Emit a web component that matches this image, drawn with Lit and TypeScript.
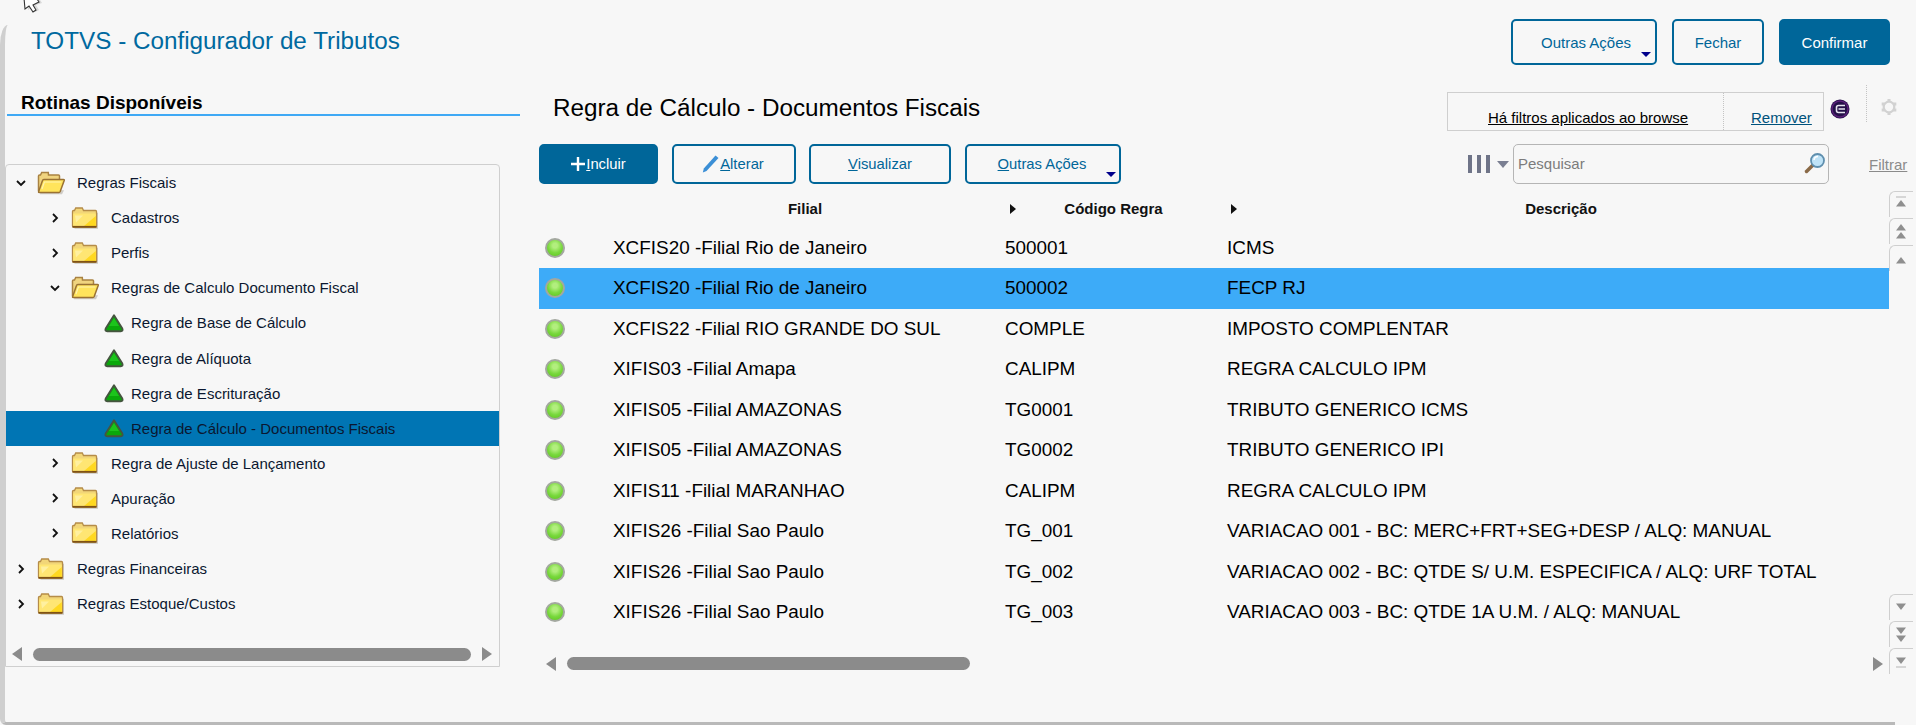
import { LitElement, html, css, svg } from "lit";
import { customElement } from "lit/decorators.js";

const folderClosed = html`<svg class="folder" viewBox="0 0 28 24" width="28" height="24">
  <path d="M3.500 22.800h23.500v-16h-1.500v14.500h-22z" fill="#c4c1ba" opacity=".85"/>
  <path d="M1.500 5.500q0-1 1-1h1l1.200-2.500h6.600l1.200 2.500h12q1 0 1 1v14.500q0 1-1 1h-22q-1 0-1-1z" fill="#f2d678" stroke="#b58c48" stroke-width="1.300"/>
  <path d="M2.200 7.500h22.600v12.500h-22.600z" fill="#ffe673"/>
  <path d="M13 20l11.800-10v10z" fill="#ffd820"/>
  <path d="M4 9.500l8 0-7 7z" fill="#fff0a0"/>
  <path d="M1.500 20.800h24" stroke="#7f5215" stroke-width="1.800"/>
</svg>`;

const folderOpen = html`<svg class="folder" viewBox="0 0 28 24" width="28" height="24">
  <path d="M3 23.200h22l2-4H4z" fill="#c4c1ba" opacity=".8"/>
  <path d="M1.500 20V5q0-1 1-1h1l1.200-2.500h6.600L11.500 4h10q1 0 1 1v4" fill="#f0d47f" stroke="#a98242" stroke-width="1.500"/>
  <path d="M1.500 21l4-11.500q.3-1 1.300-1h19.700q1 0 .7 1l-4 11q-.4 1-1.400 1H2.500q-1 0-1-.5z" fill="#ffe45c" stroke="#9a7233" stroke-width="1.500"/>
  <path d="M5 18l2.400-7h17" fill="none" stroke="#fff3b0" stroke-width="1.200"/>
</svg>`;

const leaf = html`<svg class="leaf" viewBox="0 0 20 20" width="20" height="20">
  <path d="M10 2.300L18.300 15.500q1 2.700-1.500 2.700H3.200q-2.500 0-1.500-2.700z" fill="#0aa80a" stroke="#45553f" stroke-width="1.900" stroke-linejoin="round"/>
  <path d="M10 5L5 13h10z" fill="#1cc41c"/>
</svg>`;

const chevDown = html`<svg class="chev" viewBox="0 0 10 10" width="10" height="10"><path d="M1 3l4 4 4-4" fill="none" stroke="#111" stroke-width="1.800"/></svg>`;
const chevRight = html`<svg class="chev" viewBox="0 0 10 10" width="10" height="10"><path d="M3 1l4 4-4 4" fill="none" stroke="#111" stroke-width="1.800"/></svg>`;

type TreeRow = { label: string; level: number; kind: "open" | "closed" | "leaf"; selected?: boolean };
const tree: TreeRow[] = [
  { label: "Regras Fiscais", level: 0, kind: "open" },
  { label: "Cadastros", level: 1, kind: "closed" },
  { label: "Perfis", level: 1, kind: "closed" },
  { label: "Regras de Calculo Documento Fiscal", level: 1, kind: "open" },
  { label: "Regra de Base de Cálculo", level: 2, kind: "leaf" },
  { label: "Regra de Alíquota", level: 2, kind: "leaf" },
  { label: "Regra de Escrituração", level: 2, kind: "leaf" },
  { label: "Regra de Cálculo - Documentos Fiscais", level: 2, kind: "leaf", selected: true },
  { label: "Regra de Ajuste de Lançamento", level: 1, kind: "closed" },
  { label: "Apuração", level: 1, kind: "closed" },
  { label: "Relatórios", level: 1, kind: "closed" },
  { label: "Regras Financeiras", level: 0, kind: "closed" },
  { label: "Regras Estoque/Custos", level: 0, kind: "closed" },
];

const rows: [string, string, string][] = [
  ["XCFIS20 -Filial Rio de Janeiro", "500001", "ICMS"],
  ["XCFIS20 -Filial Rio de Janeiro", "500002", "FECP RJ"],
  ["XCFIS22 -Filial RIO GRANDE DO SUL", "COMPLE", "IMPOSTO COMPLENTAR"],
  ["XIFIS03 -Filial Amapa", "CALIPM", "REGRA CALCULO IPM"],
  ["XIFIS05 -Filial AMAZONAS", "TG0001", "TRIBUTO GENERICO ICMS"],
  ["XIFIS05 -Filial AMAZONAS", "TG0002", "TRIBUTO GENERICO IPI"],
  ["XIFIS11 -Filial MARANHAO", "CALIPM", "REGRA CALCULO IPM"],
  ["XIFIS26 -Filial Sao Paulo", "TG_001", "VARIACAO 001 - BC: MERC+FRT+SEG+DESP / ALQ: MANUAL"],
  ["XIFIS26 -Filial Sao Paulo", "TG_002", "VARIACAO 002 - BC: QTDE S/ U.M. ESPECIFICA / ALQ: URF TOTAL"],
  ["XIFIS26 -Filial Sao Paulo", "TG_003", "VARIACAO 003 - BC: QTDE 1A U.M. / ALQ: MANUAL"],
];

const up = svg`<path d="M7 0L12 6.500H2z" fill="#8f8f8f"/>`;
const railBtn = (content: unknown) => html`<div class="rail-btn"><svg viewBox="0 0 14 20" width="14" height="20">${content}</svg></div>`;

@customElement("app-root")
export class AppRoot extends LitElement {
  static styles = css`
    :host { display: block; width: 1916px; height: 725px; overflow: hidden; background: #f7f7f7; font-family: "Liberation Sans", Arial, sans-serif; color: #000; }
    * { box-sizing: border-box; }
    .page { position: relative; width: 1916px; height: 725px; padding-left: 5px; display: flex; flex-direction: column; }
    .edge { position: absolute; left: 0; top: 25px; width: 1895px; height: 700px; border-left: 5px solid #cfcfcf; border-bottom: 3px solid #b9b9b9; border-top-left-radius: 8px 20px; border-bottom-left-radius: 6px; pointer-events: none; }
    .cursor { position: absolute; left: 23px; top: 0; }

    header { height: 85px; flex: none; display: flex; align-items: flex-start; padding: 19px 26px 0 26px; }
    h1 { margin: 0 auto 0 0; font-weight: 400; font-size: 24.25px; line-height: 44px; color: #00699f; }
    .btn { position: relative; height: 46px; display: flex; align-items: center; justify-content: center; border: 2px solid #006699; border-radius: 5px; color: #006699; font-size: 15px; background: transparent; }
    .btn.fill { background: #006699; color: #fff; }
    .btn .drop { position: absolute; right: 4px; bottom: 6px; width: 0; height: 0; border: 5px solid transparent; border-top: 5px solid #00008b; border-bottom: 0; }
    .top-actions { display: flex; gap: 15px; }
    .b-oa { width: 146px; padding-left: 4px; }
    .b-fe { width: 92px; }
    .b-co { width: 111px; }

    .body { flex: 1; display: flex; min-height: 0; }
    aside { width: 515px; flex: none; }
    .aside-title { margin-left: 2px; height: 31px; border-bottom: 2px solid #3fa9f5; padding-left: 14px; font-size: 19px; font-weight: 700; line-height: 36px; color: #000; }
    .tree { margin-top: 48px; width: 495px; height: 503px; border: 1px solid #cfcfcf; border-radius: 4px 4px 0 0; display: flex; flex-direction: column; }
    .tree-rows { flex: 1; }
    .tr { height: 35.1px; display: flex; align-items: center; font-size: 15px; color: #0b1730; white-space: nowrap; }
    .tr.l0 { padding-left: 10px; }
    .tr.l1 { padding-left: 44px; }
    .tr.l2 { padding-left: 94px; }
    .tr.sel { background: #0075b4; }
    .chev { flex: none; margin-right: 11px; }
    .folder { flex: none; margin-right: 12px; }
    .leaf { flex: none; margin-right: 7px; margin-left: 4px; }
    .hs { display: flex; align-items: center; flex: none; }
    .tree .hs { height: 14px; margin-bottom: 5px; padding-left: 6px; }
    .ar { width: 0; height: 0; border-top: 7px solid transparent; border-bottom: 7px solid transparent; flex: none; }
    .ar.l { border-right: 10px solid #8b8b8b; }
    .ar.r { border-left: 10px solid #8b8b8b; }
    .thumb { height: 13px; border-radius: 7px; background: #8b8b8b; flex: none; }
    .tree .thumb { width: 438px; margin: 0 11px 0 11px; }

    main { width: 1377px; margin-left: 19px; flex: none; display: flex; flex-direction: column; }
    .title-row { height: 59px; flex: none; display: flex; align-items: flex-start; }
    h2 { margin: 0 auto 0 14px; font-weight: 400; font-size: 24.25px; line-height: 46px; color: #000; white-space: nowrap; }
    .filter { margin-top: 7px; width: 377px; height: 39px; border: 1px solid #cfcfcf; display: flex; font-size: 15px; line-height: 20px; }
    .filter a { display: inline-block; text-decoration: underline; padding-top: 15px; }
    .f1 { width: 276px; padding-left: 40px; border-right: 1px dotted #c4c4c4; color: #000; }
    .f2 { padding-left: 27px; color: #00527c; }
    .badge { margin: 14px 0 0 6px; flex: none; }
    .sep { margin-left: 16px; width: 0; height: 37px; border-left: 1px dotted #c4c4c4; flex: none; }
    .gear { margin: 14px 19px 0 14px; flex: none; }

    .toolbar { height: 40px; flex: none; display: flex; align-items: stretch; }
    .toolbar .btn { height: 40px; font-size: 14.8px; margin-right: 14px; }
    .toolbar .b-al { margin-right: 13px; }
    .b-in { width: 119px; gap: 1px; }
    .b-al { width: 124px; gap: 1px; padding-right: 2px; }
    .b-vi { width: 142px; }
    .b-ou { width: 156px; padding-right: 2px; }
    .toolbar .btn .drop { bottom: 5px; right: 3px; }
    .cols { margin-left: auto; display: flex; align-items: center; gap: 7px; margin-right: 4px; }
    .caret { width: 0; height: 0; border: 6px solid transparent; border-top: 7px solid #7a7f92; border-bottom: 0; }
    .search { width: 316px; border: 1px solid #b5b5b5; border-radius: 5px; display: flex; align-items: center; justify-content: space-between; padding: 0 2px 2px 4px; font-size: 15px; color: #7c7c7c; }
    .filtrar { width: 87px; padding: 12px 9px 0 40px; font-size: 15px; color: #8b8b8b; text-decoration: underline; white-space: nowrap; }

    .grid-wrap { flex: 1; margin-top: 6px; display: flex; min-height: 0; }
    .grid { width: 1350px; flex: none; }
    .rw { display: grid; grid-template-columns: 74px 392px 222px 1fr; align-items: center; }
    .rw.hd { height: 37.7px; font-size: 15px; font-weight: 700; color: #111; }
    .hd .c { display: flex; align-items: center; }
    .hd .c span { flex: 1; text-align: center; }
    .tri { flex: none; width: 0; height: 0; border-top: 5px solid transparent; border-bottom: 5px solid transparent; border-left: 6px solid #111; }
    .c-f { padding-right: 8px; }
    .c-c { padding-right: 16px; padding-left: 5px; }
    .c-d { padding-left: 4px; padding-right: 4px; }
    .rw.d { height: 40.5px; font-size: 18.9px; white-space: nowrap; }
    .rw.d.sel { background: #3dabf8; }
    .dot { width: 20px; height: 20px; margin-left: 6px; border-radius: 50%; border: 2px solid #a3a89f; background: radial-gradient(circle at 50% 35%, #b2ee7e 0 18%, #78d83c 55%, #5cc21f 100%); }
    .grid .hs { margin-top: 24px; height: 14px; padding-left: 7px; }
    .grid .thumb { width: 403px; margin-left: 11px; margin-right: auto; }
    .grid .ar.r { margin-right: 6px; }
    .rail { width: 24px; flex: none; margin-top: 1px; height: 483px; display: flex; flex-direction: column; justify-content: space-between; }
    .rail-group { display: flex; flex-direction: column; gap: 1px; }
    .rail-btn { height: 26px; border-left: 1px solid #cfcfcf; border-top: 1px solid #cfcfcf; border-top-left-radius: 6px; padding: 3px 0 0 4px; }
  `;

  private treeRow(r: TreeRow) {
    const icon = r.kind === "leaf" ? leaf : r.kind === "open" ? folderOpen : folderClosed;
    const chev = r.kind === "leaf" ? "" : r.kind === "open" ? chevDown : chevRight;
    return html`<div class="tr l${r.level} ${r.selected ? "sel" : ""}">${chev}${icon}<span>${r.label}</span></div>`;
  }

  render() {
    return html`<div class="page">
      <header>
        <h1>TOTVS - Configurador de Tributos</h1>
        <div class="top-actions">
          <div class="btn b-oa">Outras Ações<i class="drop"></i></div>
          <div class="btn b-fe">Fechar</div>
          <div class="btn fill b-co">Confirmar</div>
        </div>
      </header>
      <div class="body">
        <aside>
          <div class="aside-title">Rotinas Disponíveis</div>
          <div class="tree">
            <div class="tree-rows">${tree.map((r) => this.treeRow(r))}</div>
            <div class="hs"><i class="ar l"></i><i class="thumb"></i><i class="ar r"></i></div>
          </div>
        </aside>
        <main>
          <div class="title-row">
            <h2>Regra de Cálculo - Documentos Fiscais</h2>
            <div class="filter">
              <div class="f1"><a>Há filtros aplicados ao browse</a></div>
              <div class="f2"><a>Remover</a></div>
            </div>
            <svg class="badge" viewBox="0 0 20 20" width="20" height="20">
              <circle cx="10" cy="10" r="9.500" fill="#231048"/>
              <circle cx="10" cy="10" r="8" fill="none" stroke="#5a1f78" stroke-width="1.500"/>
              <path d="M15 6.500H8.500q-2 0-2 2v3q0 2 2 2H15M8.500 10H15" fill="none" stroke="#e6e3ee" stroke-width="1.600"/>
            </svg>
            <div class="sep"></div>
            <svg class="gear" viewBox="0 0 16 16" width="16" height="16">
              <circle cx="8" cy="8" r="5.300" stroke="#d2d2d2" stroke-width="2.200" fill="none"/>
              <g fill="#d2d2d2">
                <rect x="6.500" y="0" width="3" height="3"/>
                <rect x="6.500" y="13" width="3" height="3"/>
                <rect x="0.700" y="3.500" width="3" height="3"/>
                <rect x="12.300" y="3.500" width="3" height="3"/>
                <rect x="0.700" y="9.500" width="3" height="3"/>
                <rect x="12.300" y="9.500" width="3" height="3"/>
              </g>
            </svg>
          </div>
          <div class="toolbar">
            <div class="btn fill b-in">
              <svg viewBox="0 0 14 14" width="14" height="14"><path d="M7 0v14M0 7h14" stroke="#fff" stroke-width="2.400"/></svg>
              <span><u>I</u>ncluir</span>
            </div>
            <div class="btn b-al">
              <svg viewBox="0 0 17 18" width="17" height="18"><path d="M13.500 0.500l3 2.500L4.500 16 0.800 17.500l1-4z" fill="#3b8fd6"/></svg>
              <span><u>A</u>lterar</span>
            </div>
            <div class="btn b-vi"><span><u>V</u>isualizar</span></div>
            <div class="btn b-ou"><span><u>O</u>utras Ações</span><i class="drop"></i></div>
            <div class="cols">
              <svg viewBox="0 0 22 18" width="22" height="18"><path d="M0 0h4v18H0zM9 0h4v18H9zM18 0h4v18h-4z" fill="#6f7488"/></svg>
              <i class="caret"></i>
            </div>
            <div class="search">
              <span>Pesquisar</span>
              <svg viewBox="0 0 22 22" width="22" height="22">
                <path d="M9 13L2.500 19.500" stroke="#8a6a48" stroke-width="3.500" stroke-linecap="round"/>
                <circle cx="13.500" cy="8.500" r="6.500" fill="#bfe3f7" stroke="#5f8fae" stroke-width="1.800"/>
                <path d="M10 8a4 4 0 0 1 4-3.500" stroke="#fff" stroke-width="1.500" fill="none"/>
              </svg>
            </div>
            <div class="filtrar">Filtrar</div>
          </div>
          <div class="grid-wrap">
            <div class="grid">
              <div class="rw hd">
                <div></div>
                <div class="c c-f"><span>Filial</span></div>
                <div class="c c-c"><i class="tri"></i><span>Código Regra</span></div>
                <div class="c c-d"><i class="tri"></i><span>Descrição</span></div>
              </div>
              ${rows.map(
                (r, i) => html`<div class="rw d ${i === 1 ? "sel" : ""}">
                  <div><div class="dot"></div></div>
                  <div>${r[0]}</div>
                  <div>${r[1]}</div>
                  <div>${r[2]}</div>
                </div>`
              )}
              <div class="hs"><i class="ar l"></i><i class="thumb"></i><i class="ar r"></i></div>
            </div>
            <div class="rail">
              <div class="rail-group">
                ${railBtn(svg`<path d="M2 2h10" stroke="#b5b5b5"/><g transform="translate(0 5)">${up}</g>`)}
                ${railBtn(svg`<g transform="translate(0 2)">${up}</g><g transform="translate(0 10)">${up}</g>`)}
                ${railBtn(svg`<g transform="translate(0 8)">${up}</g>`)}
              </div>
              <div class="rail-group">
                ${railBtn(svg`<g transform="translate(0 12) scale(1 -1)">${up}</g>`)}
                ${railBtn(svg`<g transform="translate(0 9) scale(1 -1)">${up}</g><g transform="translate(0 17) scale(1 -1)">${up}</g>`)}
                ${railBtn(svg`<g transform="translate(0 12) scale(1 -1)">${up}</g><path d="M2 15h10" stroke="#b5b5b5"/>`)}
              </div>
            </div>
          </div>
        </main>
      </div>
      <div class="edge"></div>
      <svg class="cursor" viewBox="0 0 20 14" width="20" height="14">
        <path d="M4 0l1 10 4-3 3 5 4-2-3-5 6-2-2-3z" fill="#bbb" opacity=".5"/>
        <path d="M1 -2l1 11 4-3 4 6 3-2-3-5 6-3-2-3z" fill="#fff" stroke="#333" stroke-width="1.100"/>
      </svg>
    </div>`;
  }
}
